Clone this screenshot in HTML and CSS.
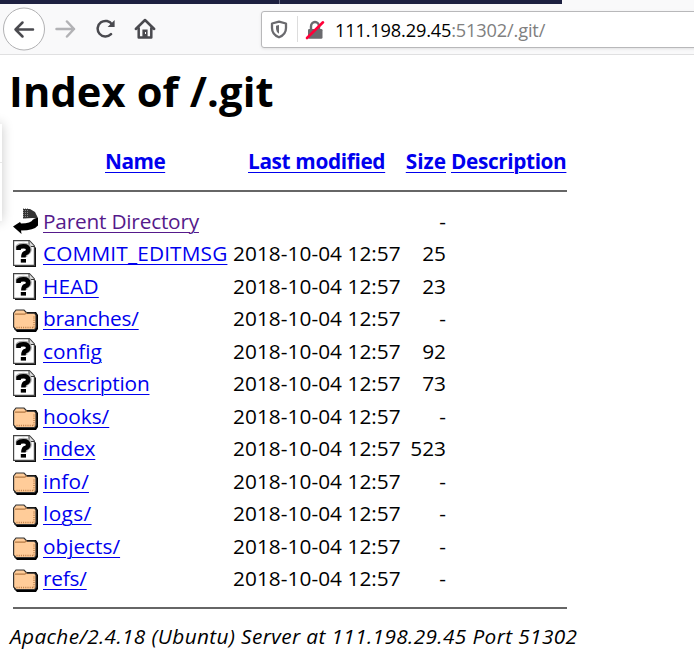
FILE: index.html
```
<!DOCTYPE html>
<html lang="en">
<head>
<meta charset="utf-8">
<title>Index of /.git</title>
<link rel="stylesheet" href="styles.css">
</head>
<body>
<svg class="defs" width="0" height="0">
  <symbol id="unknown" viewBox="0 0 24 28">
    <path d="M2 2H18L23 8V27H2Z" fill="#111"/>
    <path d="M.6 .6H16.4L21.4 6V25.4H.6Z" fill="#fff" stroke="#444" stroke-width="1.2"/>
    <path d="M16 1V6.5H21.4" fill="#ddd" stroke="#333"/>
    <path d="M5 10V6.6Q6.5 5 10.5 5Q16.5 5 16.5 9.2Q16.5 12.5 12 14V17" fill="none" stroke="#aaa" stroke-width="4.6"/>
    <path d="M5.6 10V7.6Q7 6.2 10.3 6.2Q15.2 6.2 15.2 9.7Q15.2 12 12.5 13Q10.4 13.7 10.4 17.4" fill="none" stroke="#000" stroke-width="4.6"/>
    <path d="M7.8 19H13V22.6H7.8Z"/>
  </symbol>
  <symbol id="folder" viewBox="0 0 26 23">
    <path d="M3 3H23L25 6V20L23 23H4L1 20Z" fill="#000"/>
    <path d="M.6 4L3 1H11L14 4.2H21.5L23 6V18.5L21.5 20.5H3L.6 18Z" fill="#fc9" stroke="#333" stroke-width="1.2"/>
    <path d="M2 5.2H11.8L13.8 3.8" fill="none" stroke="#b47843" stroke-width="1.2"/>
    <path d="M3.5 18.5H21V7" fill="none" stroke="#bd7d48" stroke-width="1.5" stroke-dasharray="1 1.2"/>
  </symbol>
  <symbol id="back" viewBox="0 0 26 26">
    <path d="M10 1H17L22 4L24.5 9V11L20 10L10 10.5Z" fill="#333"/>
    <path d="M10.5 0V10.5M12.5 0V10.5M14.5 0V10" stroke="#999" stroke-width=".8" stroke-dasharray="1 1"/>
    <path d="M25 9.5V17.5Q21 22.5 8 22.5L8.5 26L0 18.5L7 14L8 15.5Q18 15.5 20 11.5Z" fill="#000"/>
  </symbol>
</svg>
<header class="chrome">
  <div class="tabs"><i></i></div>
  <div class="toolbar">
    <span class="back"><svg width="42" height="44" viewBox="0 0 42 44"><ellipse cx="21" cy="22" rx="20.5" ry="21" fill="#fff" stroke="#b1b1b3"/><path d="M30 22.5H12.5M19.5 15.5L12.5 22.5L19.5 29.5" class="ink"/></svg></span>
    <svg class="forward" width="22" height="20" viewBox="0 0 22 20"><path d="M1.5 10H19M12 2.5L19 10L12 17.5" class="ink"/></svg>
    <svg class="reload" width="22" height="20" viewBox="0 0 22 20"><path d="M15 15.2A7.8 7.8 0 1 1 16.2 5.8" class="ink"/><path d="M18.6 1V8H11.6Z" fill="#4a4a4f"/></svg>
    <svg class="home" width="22" height="22" viewBox="0 0 22 22"><path d="M1.8 11L11 2L20.2 11M4.7 10V19.5H17.3V10" class="ink"/><path d="M8.4 20V11.5H13.6V20Z" fill="#4a4a4f"/><path d="M11.5 14V16" stroke="#fff"/></svg>
    <div class="urlbar">
      <svg class="shield" width="18" height="19" viewBox="0 0 18 19"><path d="M9 1.7L16 3.5V8Q16 14.5 9 17.3Q2 14.5 2 8V3.5Z" fill="none" stroke="#6a6a6e" stroke-width="2.3" stroke-linejoin="round"/><path d="M9 5L6 5.8V9Q6.2 12 9 13.8Z" fill="#6a6a6e"/></svg>
      <i class="sep"></i>
      <svg class="lock" width="20" height="20" viewBox="0 0 20 20"><path d="M6 10V6.5A4 4.5 0 0 1 14 6.5V10" fill="none" stroke="#6a6a6e" stroke-width="2.4"/><rect x="3" y="9" width="14.5" height="9.8" rx="1.3" fill="#6a6a6e"/><path d="M2 18L18 2.3" stroke="#ff0039" stroke-width="2.6" stroke-linecap="round"/></svg>
      <span class="url"><b>111.198.29.45</b>:51302/.git/</span>
    </div>
  </div>
</header>
<div class="panel"></div>
<main>
  <h1>Index of /.git</h1>
  <div class="row head">
    <span></span><span class="h-name"><a>Name</a></span><span class="h-date"><a>Last modified</a></span><span class="size"><a>Size</a></span><span class="h-desc"><a>Description</a></span>
  </div>
  <hr>
  <div class="list">
    <div class="row"><svg class="ic-back"><use href="#back"/></svg><span><a class="visited tight">Parent Directory</a></span><span></span><span class="size">-</span></div>
    <div class="row"><svg class="ic-file"><use href="#unknown"/></svg><span><a class="wide">COMMIT_EDITMSG</a></span><span class="date">2018-10-04 12:57</span><span class="size">25</span></div>
    <div class="row"><svg class="ic-file"><use href="#unknown"/></svg><span><a class="wide">HEAD</a></span><span class="date">2018-10-04 12:57</span><span class="size">23</span></div>
    <div class="row"><svg class="ic-folder"><use href="#folder"/></svg><span><a class="tight">branches/</a></span><span class="date">2018-10-04 12:57</span><span class="size">-</span></div>
    <div class="row"><svg class="ic-file"><use href="#unknown"/></svg><span><a>config</a></span><span class="date">2018-10-04 12:57</span><span class="size">92</span></div>
    <div class="row"><svg class="ic-file"><use href="#unknown"/></svg><span><a class="tight">description</a></span><span class="date">2018-10-04 12:57</span><span class="size">73</span></div>
    <div class="row"><svg class="ic-folder"><use href="#folder"/></svg><span><a>hooks/</a></span><span class="date">2018-10-04 12:57</span><span class="size">-</span></div>
    <div class="row"><svg class="ic-file"><use href="#unknown"/></svg><span><a class="tight">index</a></span><span class="date">2018-10-04 12:57</span><span class="size">523</span></div>
    <div class="row"><svg class="ic-folder"><use href="#folder"/></svg><span><a class="wide">info/</a></span><span class="date">2018-10-04 12:57</span><span class="size">-</span></div>
    <div class="row"><svg class="ic-folder"><use href="#folder"/></svg><span><a class="wider">logs/</a></span><span class="date">2018-10-04 12:57</span><span class="size">-</span></div>
    <div class="row"><svg class="ic-folder"><use href="#folder"/></svg><span><a>objects/</a></span><span class="date">2018-10-04 12:57</span><span class="size">-</span></div>
    <div class="row"><svg class="ic-folder"><use href="#folder"/></svg><span><a class="tight">refs/</a></span><span class="date">2018-10-04 12:57</span><span class="size">-</span></div>
  </div>
  <hr>
  <address>Apache/2.4.18 (Ubuntu) Server at 111.198.29.45 Port 51302</address>
</main>
</body>
</html>
```
FILE: styles.css
```
* { box-sizing: border-box; }
body {
  margin: 0;
  height: 656px;
  overflow: hidden;
  background: #fff;
  color: #000;
  font: 20.8px/32.5px "Open Sans", "Noto Sans", sans-serif;
}
svg { display: block; flex: none; }
.defs { position: absolute; }
.chrome { height: 55px; background: #f9f9fa; border-bottom: 1px solid #e0e0e1; }
.tabs { width: 562px; height: 4px; background: #1d2040; }
.tabs i { display: block; width: 1px; height: 4px; margin-left: 279px; background: #666982; }
.toolbar { display: flex; height: 50px; padding-left: 3px; }
.ink { fill: none; stroke: #4a4a4f; stroke-width: 2.5; stroke-linecap: round; stroke-linejoin: round; }
.back { margin-top: 3px; }
.forward { margin: 15px 0 0 10px; opacity: .4; }
.reload { margin: 15px 0 0 19px; }
.home { margin: 14px 0 0 16px; }
.urlbar {
  display: flex;
  flex: none;
  width: 445px;
  height: 37px;
  margin: 7px 0 0 105px;
  background: #fff;
  border: 1px solid #b8b8ba;
  border-radius: 3px;
  box-shadow: 0 1px 3px rgba(0, 0, 0, .1);
}
.shield { margin: 8px 0 0 8px; }
.sep { width: 1px; height: 26px; margin: 4px 0 0 9px; background: #ddd; }
.lock { margin: 8px 0 0 7px; }
.url { margin-left: 10px; font-size: 18.2px; line-height: 36px; letter-spacing: -.16px; color: #808080; white-space: nowrap; }
.url b { font-weight: 400; color: #000; }
.panel {
  position: absolute;
  left: -10px;
  top: 124px;
  width: 12px;
  height: 97px;
  background: linear-gradient(#fff 38px, #e8e8e8 38px, #e8e8e8 39px, #fff 39px);
  box-shadow: 0 0 12px rgba(0, 0, 0, .22);
}
main { padding-left: 10px; }
h1 { margin: 6px 0 0 -1px; height: 60px; font-size: 41.6px; line-height: 60px; letter-spacing: .14px; white-space: nowrap; }
.row {
  display: grid;
  grid-template-columns: 30px 190px 168px 45px 130px;
  height: 32.5px;
  margin-left: 3px;
  white-space: nowrap;
}
.head { margin-top: 24px; height: 45px; font-weight: 700; }
a { color: #00e; text-decoration: underline; text-decoration-thickness: 1px; text-underline-offset: 3px; }
.visited { color: #551a8b; }
.tight { letter-spacing: -.2px; }
.wide { letter-spacing: .16px; }
.wider { letter-spacing: .4px; }
.date { letter-spacing: .05px; }
.h-name { padding-left: 62px; letter-spacing: -.5px; }
.h-date { padding-left: 15px; letter-spacing: -.35px; }
.h-desc { padding-left: 5px; letter-spacing: -.38px; }
.size { text-align: right; }
hr { width: 554px; height: 2px; margin: 0 0 0 3px; border: 0; background: #666; }
.list { margin-top: 12.9px; height: 402.1px; }
.ic-back { width: 26px; height: 26px; margin-top: 3px; }
.ic-file { width: 24px; height: 28px; margin-top: 3px; }
.ic-folder { width: 26px; height: 23px; margin-top: 7px; }
address { margin-top: 11px; font-style: italic; letter-spacing: .38px; white-space: nowrap; }
```
